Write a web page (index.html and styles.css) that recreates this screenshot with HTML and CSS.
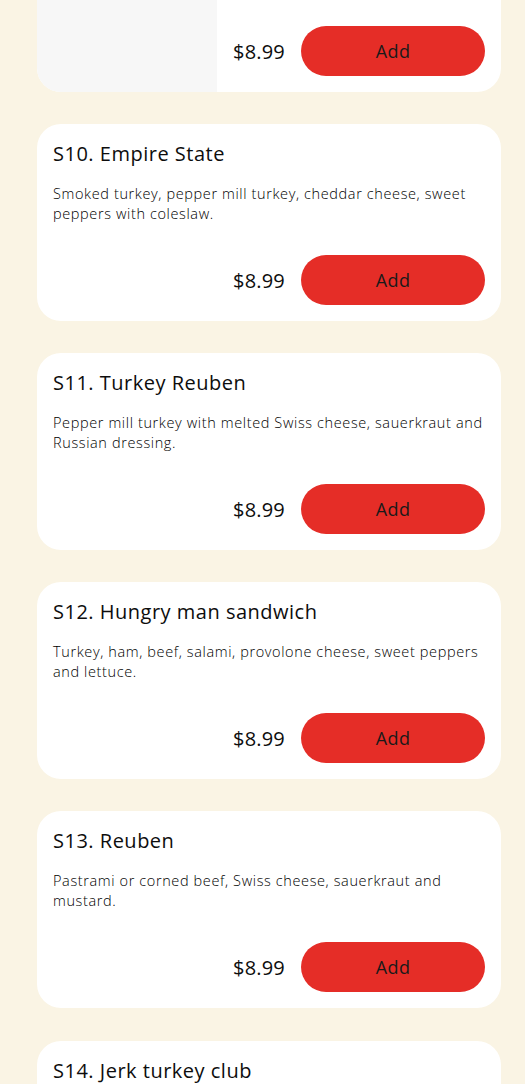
FILE: index.html
```html
<!DOCTYPE html>
<html lang="en">
<head>
<meta charset="utf-8">
<title>Menu</title>
<link rel="stylesheet" href="styles.css">
</head>
<body>
<main class="menu">
  <article class="card card--image">
    <div class="card-image"></div>
    <div class="card-body card-body--end">
      <div class="card-footer">
        <span class="price">$8.99</span>
        <button class="add-btn">Add</button>
      </div>
    </div>
  </article>

  <article class="card">
    <div class="card-body">
      <h2 class="title">S10. Empire State</h2>
      <p class="desc">Smoked turkey, pepper mill turkey, cheddar cheese, sweet peppers with coleslaw.</p>
      <div class="card-footer">
        <span class="price">$8.99</span>
        <button class="add-btn">Add</button>
      </div>
    </div>
  </article>

  <article class="card">
    <div class="card-body">
      <h2 class="title">S11. Turkey Reuben</h2>
      <p class="desc">Pepper mill turkey with melted Swiss cheese, sauerkraut and Russian dressing.</p>
      <div class="card-footer">
        <span class="price">$8.99</span>
        <button class="add-btn">Add</button>
      </div>
    </div>
  </article>

  <article class="card">
    <div class="card-body">
      <h2 class="title">S12. Hungry man sandwich</h2>
      <p class="desc">Turkey, ham, beef, salami, provolone cheese, sweet peppers and lettuce.</p>
      <div class="card-footer">
        <span class="price">$8.99</span>
        <button class="add-btn">Add</button>
      </div>
    </div>
  </article>

  <article class="card">
    <div class="card-body">
      <h2 class="title">S13. Reuben</h2>
      <p class="desc">Pastrami or corned beef, Swiss cheese, sauerkraut and mustard.</p>
      <div class="card-footer">
        <span class="price">$8.99</span>
        <button class="add-btn">Add</button>
      </div>
    </div>
  </article>

  <article class="card card--last">
    <div class="card-body">
      <h2 class="title">S14. Jerk turkey club</h2>
      <p class="desc">Jerk turkey, bacon, lettuce, tomato and mayo.</p>
      <div class="card-footer">
        <span class="price">$8.99</span>
        <button class="add-btn">Add</button>
      </div>
    </div>
  </article>
</main>
</body>
</html>
```

FILE: styles.css
```css
html, body {
  margin: 0;
  padding: 0;
  background: #faf4e4;
}

body {
  font-family: "Open Sans", "Liberation Sans", sans-serif;
  color: #0d0d0d;
  overflow: hidden;
}

.menu {
  display: flex;
  flex-direction: column;
  gap: 32px;
  padding: 0 24px 40px 37px;
  width: 464px;
}

.card {
  background: #fff;
  border-radius: 24px;
  display: flex;
  overflow: hidden;
}

.card--image {
  margin-top: -60px;
  height: 152px;
}

.card--last {
  margin-top: 1px;
}

.card-image {
  width: 180px;
  flex: none;
  background: #f7f7f7;
}

.card-body {
  flex: 1;
  display: flex;
  flex-direction: column;
  padding: 16px;
}

.card-body--end {
  justify-content: flex-end;
}

.title {
  margin: 0;
  font-size: 20px;
  line-height: 28px;
  font-weight: 500;
  letter-spacing: 0.5px;
}

.desc {
  margin: 16px 0 0;
  font-size: 14.5px;
  line-height: 20px;
  font-weight: 300;
  letter-spacing: 0.62px;
  color: #000;
}

.card-footer {
  display: flex;
  justify-content: flex-end;
  align-items: center;
  gap: 16px;
  margin-top: 31px;
}

.card-body--end .card-footer {
  margin-top: 0;
}

.price {
  font-size: 20px;
  font-weight: 400;
  letter-spacing: 0.2px;
}

.add-btn {
  width: 184px;
  height: 50px;
  border: none;
  border-radius: 25px;
  background: #e52d27;
  color: #1a1a1a;
  font-family: inherit;
  font-size: 18px;
  font-weight: 400;
  letter-spacing: 0.4px;
  padding: 0;
}
```
